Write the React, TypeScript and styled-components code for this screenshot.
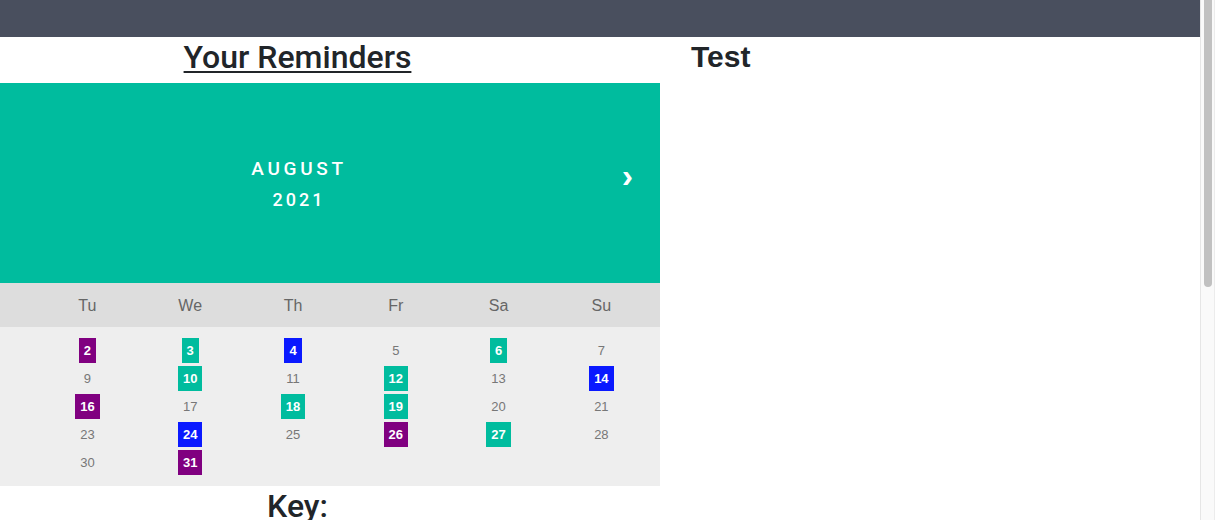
import React from "react";
import styled, { createGlobalStyle } from "styled-components";

const GlobalStyle = createGlobalStyle`
  html, body {
    margin: 0;
    padding: 0;
    background: #fff;
    font-family: Roboto, "Liberation Sans", sans-serif;
    color: #212529;
  }
`;

type Tag = "purple" | "teal" | "blue" | null;

const COLORS: Record<string, string> = {
  purple: "#800080",
  teal: "#00bc9e",
  blue: "#0a19ff",
};

// Mondays are not shown, rows start on Tuesday
const weeks: { day: number; tag: Tag }[][] = [
  [
    { day: 2, tag: "purple" },
    { day: 3, tag: "teal" },
    { day: 4, tag: "blue" },
    { day: 5, tag: null },
    { day: 6, tag: "teal" },
    { day: 7, tag: null },
  ],
  [
    { day: 9, tag: null },
    { day: 10, tag: "teal" },
    { day: 11, tag: null },
    { day: 12, tag: "teal" },
    { day: 13, tag: null },
    { day: 14, tag: "blue" },
  ],
  [
    { day: 16, tag: "purple" },
    { day: 17, tag: null },
    { day: 18, tag: "teal" },
    { day: 19, tag: "teal" },
    { day: 20, tag: null },
    { day: 21, tag: null },
  ],
  [
    { day: 23, tag: null },
    { day: 24, tag: "blue" },
    { day: 25, tag: null },
    { day: 26, tag: "purple" },
    { day: 27, tag: "teal" },
    { day: 28, tag: null },
  ],
  [
    { day: 30, tag: null },
    { day: 31, tag: "purple" },
  ],
];

const weekdays = ["Tu", "We", "Th", "Fr", "Sa", "Su"];

const keyItems = [
  { tag: "purple", label: "Appointments" },
  { tag: "teal", label: "Tasks" },
  { tag: "blue", label: "Birthdays" },
];

const App = (): JSX.Element => {
  return (
    <Shell>
      <GlobalStyle />
      <Main>
        <NavBar />
        <Page>
          <LeftCol>
            <Title underline>Your Reminders</Title>
            <Calendar>
              <MonthHeader>
                <MonthTitle>
                  <MonthName>AUGUST</MonthName>
                  <YearName>2021</YearName>
                </MonthTitle>
                <NextArrow>›</NextArrow>
              </MonthHeader>
              <WeekdayRow>
                {weekdays.map((w) => (
                  <Weekday key={w}>{w}</Weekday>
                ))}
              </WeekdayRow>
              <DaysGrid>
                {weeks.map((week, i) =>
                  week.map((d) => (
                    <DayCell key={`${i}-${d.day}`}>
                      <DayNum color={d.tag ? COLORS[d.tag] : undefined}>
                        {d.day}
                      </DayNum>
                    </DayCell>
                  ))
                )}
              </DaysGrid>
            </Calendar>
            <Title>Key:</Title>
            <KeyList>
              {keyItems.map((k) => (
                <KeyRow key={k.tag}>
                  <Swatch color={COLORS[k.tag]} />
                  {k.label}
                </KeyRow>
              ))}
            </KeyList>
          </LeftCol>
          <RightCol>
            <SideTitle>Test</SideTitle>
          </RightCol>
        </Page>
      </Main>
      <ScrollTrack>
        <ScrollThumb />
      </ScrollTrack>
    </Shell>
  );
};

const Shell = styled.div`
  display: flex;
  align-items: flex-start;
`;

const Main = styled.div`
  flex: 1;
  min-width: 0;
`;

const ScrollTrack = styled.div`
  position: sticky;
  top: 0;
  width: 15px;
  height: 100vh;
  flex-shrink: 0;
  box-sizing: border-box;
  background: #fafafa;
  border-left: 1px solid #e6e6e6;
  border-right: 1px solid #ececec;
  padding: 0 2px 0 3px;
`;

const ScrollThumb = styled.div`
  height: 287px;
  background: #c1c1c1;
  border-radius: 0 0 4px 4px;
`;

const NavBar = styled.div`
  height: 37px;
  background: #494f5e;
`;

const Page = styled.div`
  display: flex;
  min-height: 903px;
`;

const LeftCol = styled.div`
  width: 660px;
  flex-shrink: 0;
`;

const RightCol = styled.div`
  flex: 1;
  padding-left: 31px;
`;

const Title = styled.h2<{ underline?: boolean }>`
  margin: 0 0 6px;
  width: 595px;
  text-align: center;
  font-family: Roboto, "Liberation Sans", sans-serif;
  font-size: 32px;
  font-weight: 500;
  line-height: 40px;
  color: #212529;
  text-decoration: ${(p) => (p.underline ? "underline" : "none")};
  text-decoration-thickness: 2px;
  text-underline-offset: 3px;
`;

const SideTitle = styled.h2`
  margin: 0;
  font-family: "Liberation Sans", Arial, sans-serif;
  font-size: 30px;
  font-weight: 700;
  line-height: 40px;
  color: #212529;
`;

const Calendar = styled.div`
  width: 660px;
  font-family: "Liberation Sans", Arial, sans-serif;
`;

const MonthHeader = styled.div`
  height: 200px;
  background: #00bc9e;
  color: #fff;
  display: flex;
  align-items: center;
`;

const MonthTitle = styled.div`
  width: 595px;
  display: flex;
  flex-direction: column;
  align-items: center;
  padding-top: 2px;
  font-family: Roboto, "Liberation Sans", sans-serif;
  font-weight: 500;
`;

const MonthName = styled.div`
  font-size: 19px;
  letter-spacing: 3.7px;
  line-height: 31px;
  padding-left: 3px;
`;

const YearName = styled.div`
  font-size: 18px;
  letter-spacing: 3px;
  line-height: 31px;
  padding-left: 3px;
`;

const NextArrow = styled.div`
  width: 65px;
  text-align: center;
  font-size: 34px;
  font-weight: 700;
  line-height: 1;
  margin-top: -16px;
`;

const WeekdayRow = styled.div`
  height: 44px;
  background: #dddddd;
  display: grid;
  grid-template-columns: repeat(6, 102.8px);
  padding-left: 36px;
  align-items: center;
  padding-top: 1px;
  box-sizing: border-box;
`;

const Weekday = styled.div`
  text-align: center;
  font-size: 16px;
  color: #666;
`;

const DaysGrid = styled.div`
  background: #eeeeee;
  display: grid;
  grid-template-columns: repeat(6, 102.8px);
  grid-auto-rows: 28px;
  padding: 9px 0 10px 36px;
`;

const DayCell = styled.div`
  display: flex;
  align-items: center;
  justify-content: center;
`;

const DayNum = styled.span<{ color?: string }>`
  display: inline-block;
  height: 25px;
  line-height: 25px;
  padding: 0 5px;
  font-size: 13px;
  font-weight: ${(p) => (p.color ? 700 : 400)};
  color: ${(p) => (p.color ? "#fff" : "#777")};
  background: ${(p) => p.color || "transparent"};
`;

const KeyList = styled.div`
  width: 595px;
  display: flex;
  flex-direction: column;
  align-items: center;
  gap: 12px;
  padding-top: 10px;
  font-size: 18px;
`;

const KeyRow = styled.div`
  display: flex;
  align-items: center;
  gap: 10px;
`;

const Swatch = styled.span<{ color: string }>`
  width: 20px;
  height: 20px;
  background: ${(p) => p.color};
`;

export default App;
